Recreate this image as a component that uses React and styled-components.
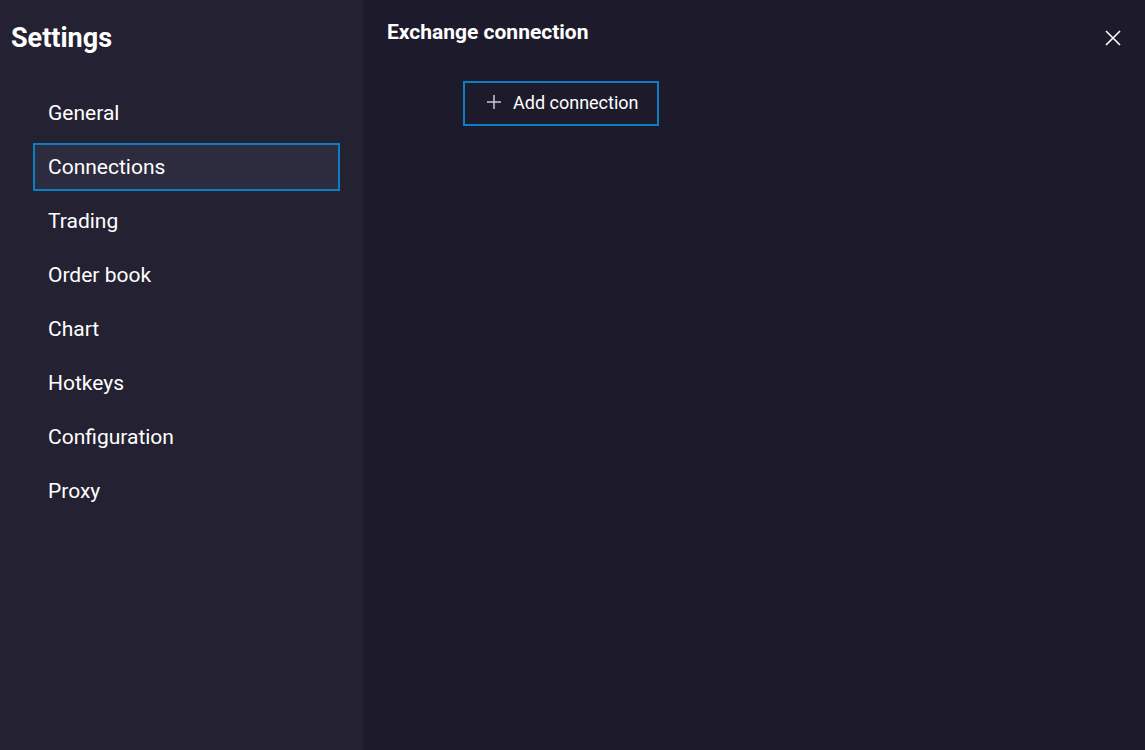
import React from 'react'
import styled, { createGlobalStyle } from 'styled-components'

const Global = createGlobalStyle`
  html, body, #root { margin: 0; height: 100%; }
  body {
    background: #1c1a2b;
    font-family: Roboto, "Liberation Sans", sans-serif;
    color: #fff;
  }
`

const Layout = styled.div`
  display: flex;
  height: 750px;
`

const Sidebar = styled.aside`
  width: 363px;
  flex-shrink: 0;
  background: #242232;
  box-sizing: border-box;
  padding: 20px 23px 0 11px;
`

const Heading = styled.h1`
  margin: 0 0 33px;
  font-size: 27px;
  font-weight: 700;
  line-height: 36px;
`

const Nav = styled.nav`
  display: flex;
  flex-direction: column;
  gap: 6px;
  padding-left: 22px;
`

const NavItem = styled.div`
  height: 48px;
  box-sizing: border-box;
  display: flex;
  align-items: center;
  padding-left: 13px;
  font-size: 21px;
  border: 2px solid ${p => (p.$active ? '#0a7fc4' : 'transparent')};
  background: ${p => (p.$active ? '#2d2b3e' : 'transparent')};
  cursor: pointer;
`

const Main = styled.main`
  flex: 1;
  position: relative;
  padding: 20px 24px 0 24px;
`

const Title = styled.h2`
  margin: 0;
  font-size: 21px;
  font-weight: 700;
  line-height: 24px;
`

const Actions = styled.div`
  display: flex;
  padding: 37px 0 0 76px;
`

const AddButton = styled.button`
  display: flex;
  align-items: center;
  gap: 11px;
  height: 45px;
  width: 196px;
  box-sizing: border-box;
  padding: 0 0 3px 21px;
  background: transparent;
  border: 2px solid #0a7fc4;
  color: #fff;
  font-family: inherit;
  font-size: 18px;
  cursor: pointer;
`

const CloseButton = styled.button`
  position: absolute;
  top: 29px;
  right: 23px;
  width: 18px;
  height: 18px;
  padding: 0;
  background: none;
  border: 0;
  cursor: pointer;
  display: flex;
`

const items = ['General', 'Connections', 'Trading', 'Order book', 'Chart', 'Hotkeys', 'Configuration', 'Proxy']

export default function App() {
  return (
    <>
      <Global />
      <Layout>
        <Sidebar>
          <Heading>Settings</Heading>
          <Nav>
            {items.map(item => (
              <NavItem key={item} $active={item === 'Connections'}>{item}</NavItem>
            ))}
          </Nav>
        </Sidebar>
        <Main>
          <Title>Exchange connection</Title>
          <Actions>
            <AddButton>
              <svg width="16" height="16" viewBox="0 0 16 16">
                <path d="M8 1v14M1 8h14" stroke="#c9c8d0" strokeWidth="1.5" />
              </svg>
              Add connection
            </AddButton>
          </Actions>
          <CloseButton>
            <svg width="18" height="18" viewBox="0 0 18 18">
              <path d="M2 2l14 14M16 2L2 16" stroke="#fff" strokeWidth="1.6" />
            </svg>
          </CloseButton>
        </Main>
      </Layout>
    </>
  )
}
